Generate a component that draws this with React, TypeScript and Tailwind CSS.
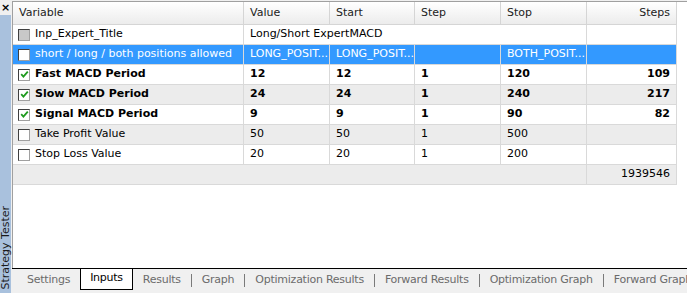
import React from 'react';

type Row = {
  name: string;
  value: string;
  start: string;
  step: string;
  stop: string;
  steps: string;
  check: 'on' | 'off' | 'disabled';
  bold?: boolean;
  selected?: boolean;
  wide?: boolean;
};

const rows: Row[] = [
  { name: 'Inp_Expert_Title', value: 'Long/Short ExpertMACD', start: '', step: '', stop: '', steps: '', check: 'disabled', wide: true },
  { name: 'short / long / both positions allowed', value: 'LONG_POSIT...', start: 'LONG_POSIT...', step: '', stop: 'BOTH_POSIT...', steps: '', check: 'off', selected: true },
  { name: 'Fast MACD Period', value: '12', start: '12', step: '1', stop: '120', steps: '109', check: 'on', bold: true },
  { name: 'Slow MACD Period', value: '24', start: '24', step: '1', stop: '240', steps: '217', check: 'on', bold: true },
  { name: 'Signal MACD Period', value: '9', start: '9', step: '1', stop: '90', steps: '82', check: 'on', bold: true },
  { name: 'Take Profit Value', value: '50', start: '50', step: '1', stop: '500', steps: '', check: 'off' },
  { name: 'Stop Loss Value', value: '20', start: '20', step: '1', stop: '200', steps: '', check: 'off' },
];

const tabs = ['Settings', 'Inputs', 'Results', 'Graph', 'Optimization Results', 'Forward Results', 'Optimization Graph', 'Forward Graph'];

const font = { fontFamily: '"DejaVu Sans", Tahoma, sans-serif' };

function CheckBox({ state }: { state: Row['check'] }) {
  return (
    <span
      className={`w-[12px] h-[12px] shrink-0 border border-t-[#404040] border-l-[#404040] border-r-[#a0a0a0] border-b-[#a0a0a0] flex items-center justify-center ${
        state === 'disabled' ? 'bg-[#c8c8c8]' : 'bg-white'
      }`}
    >
      {state === 'on' && (
        <svg width="9" height="9" viewBox="0 0 9 9">
          <path d="M1.2 4.2 L3.4 6.6 L7.8 1.6" fill="none" stroke="#1f9a1f" strokeWidth="1.8" />
        </svg>
      )}
    </span>
  );
}

export default function App() {
  const cell = 'h-[20px] flex items-center border-r border-b border-[#d9d9d9] whitespace-nowrap overflow-hidden';
  return (
    <div className="w-[687px] h-[293px] flex bg-[#f0f0f0] text-[11px] text-black overflow-hidden" style={font}>
      {/* side strip */}
      <div className="w-[14px] flex flex-col">
        <div className="h-[15px] flex items-start justify-center pt-[2px] text-[11px] font-bold leading-none text-black">×</div>
        <div className="flex-1 bg-[#a9c1dd] flex items-end justify-center pb-[3px]">
          <span className="[writing-mode:vertical-rl] rotate-180 text-[11px] text-[#1a1a1a] leading-none">Strategy Tester</span>
        </div>
      </div>
      <div className="w-[1px] bg-[#a0a0a0]" />
      <div className="flex-1 flex flex-col pt-[1px] pl-[1px]">
        <div className="flex-1 bg-white border-l border-t border-r border-[#a0a0a0] overflow-hidden">
          <div className="grid grid-cols-[231px_86px_85px_86px_86px_90px]">
            {/* header */}
            {['Variable', 'Value', 'Start', 'Step', 'Stop', 'Steps'].map((h, i) => (
              <div
                key={h}
                className={`h-[23px] flex items-center pl-[6px] pr-[6px] bg-gradient-to-b from-white to-[#ececec] border-r border-b border-[#d5d5d5] text-[#222] ${
                  i === 5 ? 'justify-end' : ''
                }`}
              >
                {h}
              </div>
            ))}
            {rows.map((r, idx) => {
              const bg = r.selected ? 'bg-[#3399ff] text-white' : idx % 2 === 1 ? 'bg-[#ececec]' : 'bg-white';
              const bd = r.selected ? 'border-[#8cc4ff]' : '';
              const w = r.bold ? 'font-bold' : '';
              const c = `${cell} ${bg} ${bd} ${w} pl-[6px] pr-[6px]`;
              return (
                <React.Fragment key={r.name}>
                  <div className={`${cell} ${bg} ${bd} ${w} gap-[5px] pl-[5px]`}>
                    <CheckBox state={r.check} />
                    <span>{r.name}</span>
                  </div>
                  {r.wide ? (
                    <div className={`${c} col-span-4`}>{r.value}</div>
                  ) : (
                    <>
                      <div className={c}>{r.value}</div>
                      <div className={c}>{r.start}</div>
                      <div className={c}>{r.step}</div>
                      <div className={c}>{r.stop}</div>
                    </>
                  )}
                  <div className={`${c} justify-end`}>{r.steps}</div>
                </React.Fragment>
              );
            })}
            <div className={`${cell} bg-[#ececec] col-span-5`} />
            <div className={`${cell} bg-[#ececec] justify-end pr-[6px]`}>1939546</div>
          </div>
        </div>
        {/* tabs */}
        <div className="h-[25px] flex items-start border-t border-black bg-[#f0f0f0] pl-[5px] mr-[4px] overflow-hidden tracking-[-0.25px]">
          {tabs.map((t, i) => {
            const active = t === 'Inputs';
            const sep = i >= 2 && i < tabs.length - 1;
            return (
              <React.Fragment key={t}>
                <div
                  className={`h-[22px] flex items-center whitespace-nowrap shrink-0 ${
                    active
                      ? 'bg-white border-l border-r border-b border-black px-[9px] -mt-[1px] text-black'
                      : 'px-[10px] text-[#6b6b6b]'
                  }`}
                >
                  {t}
                </div>
                {sep && <div className="w-[1px] h-[13px] mt-[5px] bg-[#7a7a7a] shrink-0" />}
              </React.Fragment>
            );
          })}
        </div>
      </div>
      <div className="w-[2px] bg-white" />
      <div className="w-[2px] bg-[#6e6e6e]" />
    </div>
  );
}
